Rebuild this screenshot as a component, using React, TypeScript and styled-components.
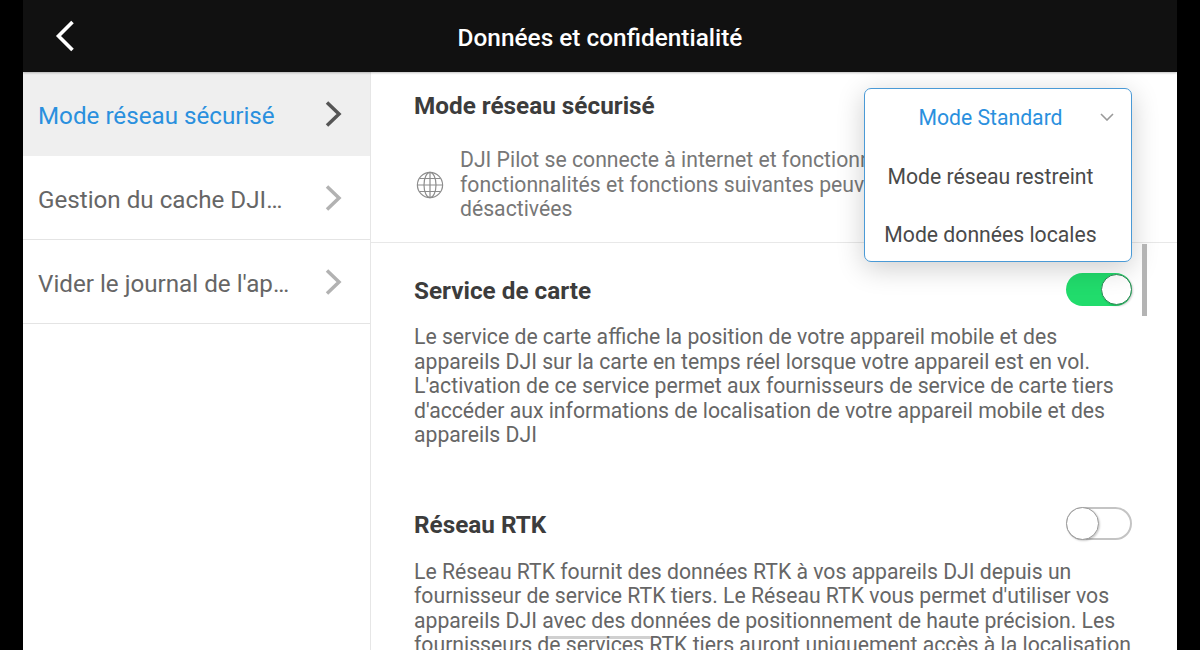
import type { FC } from "react";
import styled, { createGlobalStyle } from "styled-components";

const GlobalStyle = createGlobalStyle`
  html, body {
    margin: 0;
    height: 650px;
    overflow: hidden;
    background: #000;
    font-family: Roboto, "Liberation Sans", sans-serif;
  }
`;

const menuItems = [
  { label: "Mode réseau sécurisé", active: true },
  { label: "Gestion du cache DJI…", active: false },
  { label: "Vider le journal de l'ap…", active: false },
];

const Chevron: FC<{ $active?: boolean }> = ({ $active }) => (
  <svg width="18" height="28" viewBox="0 0 18 28" fill="none">
    <path
      d="M3 2.5 L15 14 L3 25.5"
      stroke={$active ? "#555" : "#b2b2b2"}
      strokeWidth="3.5"
    />
  </svg>
);

const Globe = () => (
  <svg width="28" height="28" viewBox="0 0 28 28" fill="none" stroke="#8d8d8d" strokeWidth="1.2">
    <circle cx="14" cy="14" r="12.6" />
    <ellipse cx="14" cy="14" rx="6" ry="12.6" />
    <path d="M14 1.4 V26.6 M1.4 14 H26.6 M3.4 7.5 H24.6 M3.4 20.5 H24.6" />
  </svg>
);

const App: FC = () => (
  <>
    <GlobalStyle />
    <Frame>
      <Header>
        <BackButton>
          <svg width="20" height="32" viewBox="0 0 20 32" fill="none">
            <path d="M17.5 2 L3.5 16 L17.5 30" stroke="#fff" strokeWidth="3.6" />
          </svg>
        </BackButton>
        <Title>Données et confidentialité</Title>
      </Header>
      <Body>
        <Sidebar>
          {menuItems.map((item) => (
            <MenuRow key={item.label} $active={item.active}>
              <MenuLabel $active={item.active}>{item.label}</MenuLabel>
              <Chevron $active={item.active} />
            </MenuRow>
          ))}
        </Sidebar>
        <Content>
          <TopSection>
            <SectionTitle>Mode réseau sécurisé</SectionTitle>
            <NoteRow>
              <Globe />
              <Note>
                DJI Pilot se connecte à internet et fonctionne normalement. Les
                <br />
                fonctionnalités et fonctions suivantes peuvent être
                <br />
                désactivées
              </Note>
            </NoteRow>
          </TopSection>

          <Section>
            <SectionHead>
              <HeadTitle>Service de carte</HeadTitle>
              <Toggle $on />
            </SectionHead>
            <Paragraph>
              Le service de carte affiche la position de votre appareil mobile et des
              appareils DJI sur la carte en temps réel lorsque votre appareil est en vol.
              L'activation de ce service permet aux fournisseurs de service de carte tiers
              d'accéder aux informations de localisation de votre appareil mobile et des
              appareils DJI
            </Paragraph>
          </Section>

          <Section>
            <SectionHead>
              <HeadTitle>Réseau RTK</HeadTitle>
              <Toggle />
            </SectionHead>
            <Paragraph>
              Le Réseau RTK fournit des données RTK à vos appareils DJI depuis un
              fournisseur de service RTK tiers. Le Réseau RTK vous permet d'utiliser vos
              appareils DJI avec des données de positionnement de haute précision. Les
              fournisseurs de services RTK tiers auront uniquement accès à la localisation
            </Paragraph>
          </Section>

          <Dropdown>
            <DropdownHead>
              <DropdownCurrent>Mode Standard</DropdownCurrent>
              <svg width="14" height="8" viewBox="0 0 14 8" fill="none">
                <path d="M1 1 L7 7 L13 1" stroke="#9a9a9a" strokeWidth="1.6" />
              </svg>
            </DropdownHead>
            <DropdownOption>Mode réseau restreint</DropdownOption>
            <DropdownOption>Mode données locales</DropdownOption>
          </Dropdown>
          <ScrollThumb />
        </Content>
      </Body>
      <HomeBar />
    </Frame>
  </>
);

export default App;

const Frame = styled.div`
  position: relative;
  width: 1154px;
  height: 650px;
  margin-left: 23px;
  display: flex;
  flex-direction: column;
  overflow: hidden;
  background: #fff;
`;

const Header = styled.header`
  position: relative;
  flex: 0 0 72px;
  display: flex;
  align-items: center;
  justify-content: center;
  background: #111;
  box-shadow: 0 1px 2px rgba(0, 0, 0, 0.25);
`;

const BackButton = styled.div`
  position: absolute;
  left: 32px;
  top: 20px;
  height: 32px;
`;

const Title = styled.h1`
  margin: 3px 0 0;
  color: #fff;
  font-size: 24.4px;
  font-weight: 500;
`;

const Body = styled.div`
  flex: 1;
  display: flex;
  min-height: 0;
`;

const Sidebar = styled.nav`
  flex: 0 0 348px;
  box-sizing: border-box;
  border-right: 1px solid #e6e6e6;
`;

const MenuRow = styled.div<{ $active: boolean }>`
  box-sizing: border-box;
  height: 84px;
  display: flex;
  align-items: center;
  justify-content: space-between;
  padding: 0 28px 0 15px;
  background: ${(p) => (p.$active ? "#efefef" : "#fff")};
  border-bottom: ${(p) => (p.$active ? "none" : "1.5px solid #e4e4e4")};
`;

const MenuLabel = styled.span<{ $active: boolean }>`
  padding-top: 4px;
  white-space: nowrap;
  font-size: 24.2px;
  color: ${(p) => (p.$active ? "#2a90de" : "#666")};
`;

const Content = styled.main`
  position: relative;
  flex: 1;
  min-width: 0;
  overflow: hidden;
  padding-right: 45px;
`;

const TopSection = styled.section`
  box-sizing: border-box;
  height: 171px;
  margin-right: -45px;
  padding: 19px 45px 0 43px;
  border-bottom: 1.5px solid #e8e8e8;
`;

const SectionTitle = styled.h2`
  margin: 0;
  color: #3c3c3c;
  font-size: 24.3px;
  line-height: 30px;
  font-weight: 700;
`;

const HeadTitle = styled(SectionTitle)`
  padding-top: 3px;
`;

const NoteRow = styled.div`
  display: flex;
  align-items: center;
  gap: 16px;
  margin-top: 27px;
  padding-left: 2px;
`;

const Note = styled.p`
  margin: 0;
  white-space: nowrap;
  color: #777;
  font-size: 21.2px;
  line-height: 24.6px;
`;

const Section = styled.section`
  padding-left: 43px;
  height: 234.5px;
`;

const SectionHead = styled.div`
  display: flex;
  align-items: center;
  justify-content: space-between;
  height: 34px;
  padding-top: 29px;
`;

const Paragraph = styled.p`
  margin: 19px 0 0;
  color: #666;
  font-size: 21.2px;
  line-height: 24.6px;
  width: 725px;
`;

const Toggle = styled.div<{ $on?: boolean }>`
  position: relative;
  box-sizing: border-box;
  width: 66px;
  height: 33px;
  border-radius: 17px;
  background: ${(p) => (p.$on ? "#21dc6c" : "#fff")};
  border: ${(p) => (p.$on ? "none" : "2px solid #c4c4c4")};

  &::after {
    content: "";
    position: absolute;
    box-sizing: border-box;
    top: ${(p) => (p.$on ? "1px" : "-2px")};
    ${(p) => (p.$on ? "right: 0;" : "left: -2px;")}
    width: ${(p) => (p.$on ? "31px" : "33px")};
    height: ${(p) => (p.$on ? "31px" : "33px")};
    border-radius: 50%;
    background: #fff;
    border: 1.5px solid ${(p) => (p.$on ? "#2e8c57" : "#9a9a9a")};
    box-shadow: 1px 1px 2px rgba(0, 0, 0, 0.2);
  }
`;

const Dropdown = styled.div`
  position: absolute;
  top: 16px;
  right: 45px;
  box-sizing: border-box;
  width: 268px;
  height: 174px;
  padding-right: 15px;
  background: #fff;
  border: 1.5px solid #4a9ad6;
  border-radius: 7px;
  box-shadow: 0 6px 28px rgba(0, 0, 0, 0.2);
`;

const DropdownHead = styled.div`
  position: relative;
  height: 57px;
  margin-bottom: 1px;
  display: flex;
  align-items: center;
  justify-content: center;

  svg {
    position: absolute;
    right: 2px;
    top: 24px;
  }
`;

const DropdownCurrent = styled.span`
  color: #2a90de;
  font-size: 21.2px;
`;

const DropdownOption = styled.div`
  height: 58px;
  display: flex;
  align-items: center;
  justify-content: center;
  color: #4a4a4a;
  font-size: 21.2px;
`;

const ScrollThumb = styled.div`
  position: absolute;
  top: 172px;
  right: 30px;
  width: 5px;
  height: 72px;
  background: #b4b4b4;
`;

const HomeBar = styled.div`
  position: absolute;
  left: 522px;
  bottom: 11px;
  width: 106px;
  height: 3px;
  border-radius: 2px;
  background: rgba(120, 120, 120, 0.35);
`;
